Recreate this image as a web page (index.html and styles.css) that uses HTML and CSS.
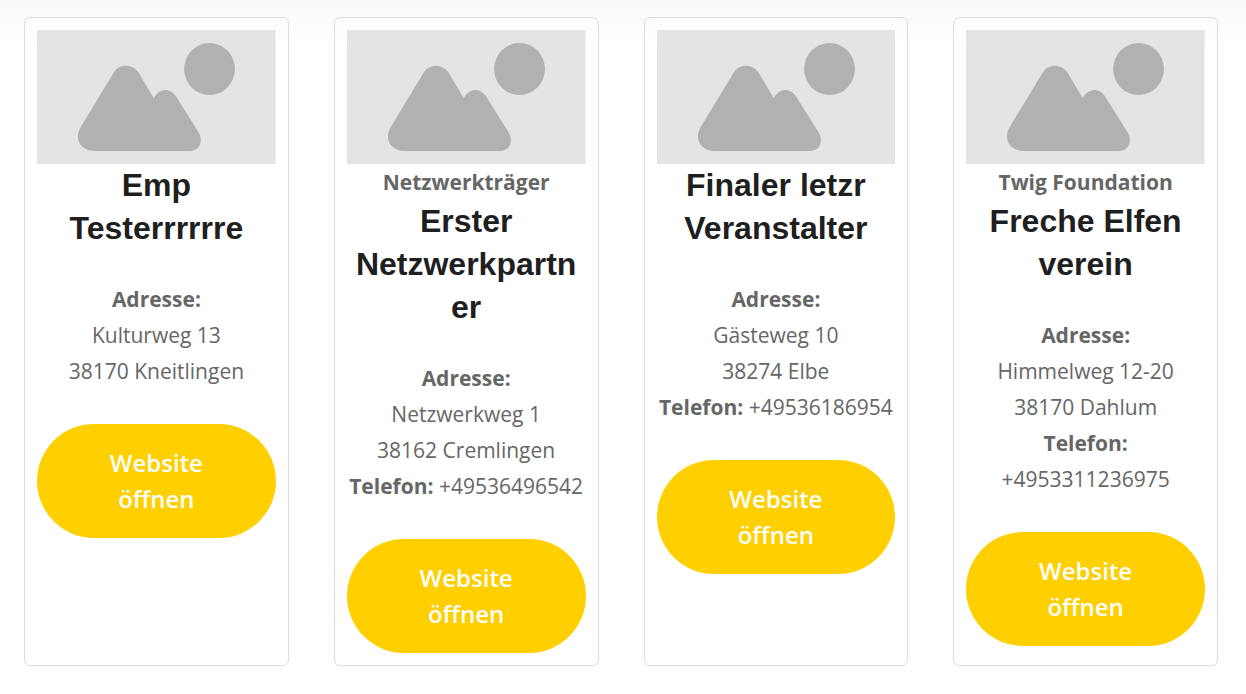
FILE: index.html
```html
<!DOCTYPE html>
<html lang="de">
<head>
<meta charset="utf-8">
<meta name="viewport" content="width=device-width, initial-scale=1">
<title>Veranstalter</title>
<link rel="stylesheet" href="styles.css">
</head>
<body>
<svg class="defs" aria-hidden="true">
  <symbol id="placeholder" viewBox="0 0 238 134">
    <rect class="ph-bg" width="238" height="134"/>
    <ellipse class="ph-shape" cx="172" cy="39" rx="25.300" ry="26"/>
    <path class="ph-shape" d="M43 98 L76.500 42.500 C82 33.500 95 33.500 101.500 43 L116.300 68 C122 58 133 57 139 67 L161.500 103 C166 112 162 121 152 121 H58 C44 121 37 110 43 98 Z"/>
  </symbol>
</svg>
<main class="cards">
  <article class="card">
    <svg class="card-image" viewBox="0 0 238 134" preserveAspectRatio="none" role="img" aria-label="Platzhalterbild"><use href="#placeholder"/></svg>
    <h2 class="card-title">Emp Testerrrrrre</h2>
    <p class="card-details"><strong>Adresse:</strong><br>Kulturweg 13<br>38170 Kneitlingen</p>
    <a class="card-button" href="#">Website öffnen</a>
  </article>
  <article class="card">
    <svg class="card-image" viewBox="0 0 238 134" preserveAspectRatio="none" role="img" aria-label="Platzhalterbild"><use href="#placeholder"/></svg>
    <strong class="card-label">Netzwerkträger</strong>
    <h2 class="card-title">Erster Netzwerkpartn&#8203;er</h2>
    <p class="card-details"><strong>Adresse:</strong><br>Netzwerkweg 1<br>38162 Cremlingen<br><strong>Telefon:</strong> +49536496542</p>
    <a class="card-button" href="#">Website öffnen</a>
  </article>
  <article class="card">
    <svg class="card-image" viewBox="0 0 238 134" preserveAspectRatio="none" role="img" aria-label="Platzhalterbild"><use href="#placeholder"/></svg>
    <h2 class="card-title">Finaler letzr Veranstalter</h2>
    <p class="card-details"><strong>Adresse:</strong><br>Gästeweg 10<br>38274 Elbe<br><strong>Telefon:</strong> +49536186954</p>
    <a class="card-button" href="#">Website öffnen</a>
  </article>
  <article class="card">
    <svg class="card-image" viewBox="0 0 238 134" preserveAspectRatio="none" role="img" aria-label="Platzhalterbild"><use href="#placeholder"/></svg>
    <strong class="card-label">Twig Foundation</strong>
    <h2 class="card-title">Freche Elfen verein</h2>
    <p class="card-details"><strong>Adresse:</strong><br>Himmelweg 12-20<br>38170 Dahlum<br><strong>Telefon:</strong> +4953311236975</p>
    <a class="card-button" href="#">Website öffnen</a>
  </article>
</main>
</body>
</html>
```
FILE: styles.css
```css
* {
  box-sizing: border-box;
}

body {
  margin: 0;
  background: #fff linear-gradient(#f9f9f9, #fff) no-repeat top / 100% 46px;
  color: #666;
  font-family: "Segoe UI", "Open Sans", sans-serif;
  font-size: 21px;
  line-height: 36px;
}

.defs {
  position: absolute;
  width: 0;
  height: 0;
}

.cards {
  display: grid;
  grid-template-columns: repeat(4, minmax(0, 1fr));
  gap: 45px;
  padding: 17px 28px 28px 24px;
}

.card {
  display: flex;
  flex-direction: column;
  padding: 12px;
  border: 1px solid #ddd;
  border-radius: 6px;
  text-align: center;
}

.card-image {
  display: block;
  width: 100%;
  height: 134px;
}

.ph-bg {
  fill: #e4e4e4;
}

.ph-shape {
  fill: #b1b1b1;
}

.card-title {
  margin: 0 0 31px;
  color: #1f1f1f;
  font-family: "Liberation Sans", Arial, sans-serif;
  font-size: 32px;
  font-weight: 700;
  line-height: 43px;
  overflow-wrap: anywhere;
}

.card-details {
  margin: 0 0 35px;
}

.card-button {
  padding: 21px 48px;
  border-radius: 57px;
  background: #ffcf00;
  color: #fff;
  font-size: 24px;
  font-weight: 600;
  text-decoration: none;
}
```
